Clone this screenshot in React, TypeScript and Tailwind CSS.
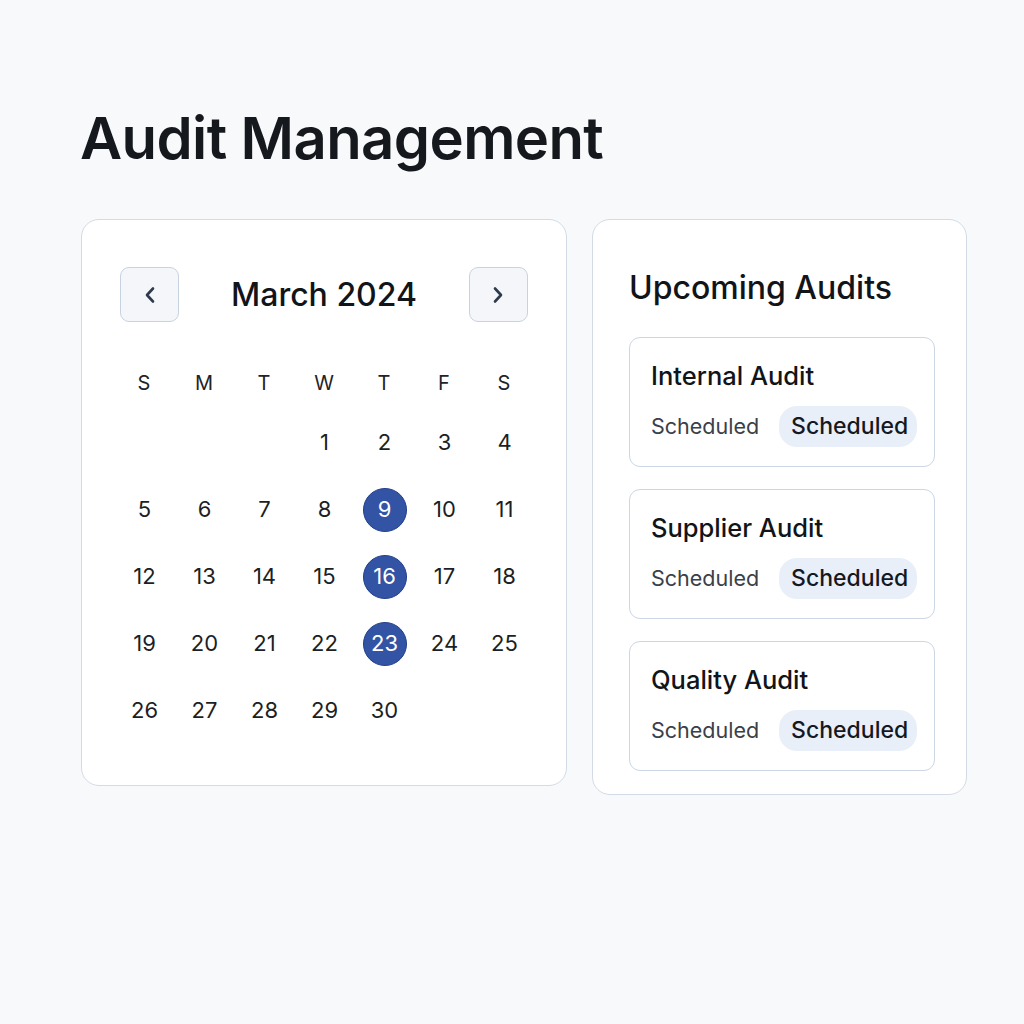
import React from "react";

const weekdays = ["S", "M", "T", "W", "T", "F", "S"];
const selected = new Set([9, 16, 23]);

function Chevron({ dir }: { dir: "left" | "right" }) {
  return (
    <svg width="12" height="18" viewBox="0 0 12 18" fill="none" stroke="#2f3a4c" strokeWidth="2.6" strokeLinecap="round" strokeLinejoin="round">
      {dir === "left" ? <path d="M9 2.5L3 9l6 6.5" /> : <path d="M3 2.5L9 9l-6 6.5" />}
    </svg>
  );
}

const audits = ["Internal Audit", "Supplier Audit", "Quality Audit"];

export default function App() {
  const cells: (number | null)[] = [null, null, null];
  for (let d = 1; d <= 30; d++) cells.push(d);
  return (
    <div className="min-h-screen w-full bg-[#f8f9fb] text-[#16191f]" style={{ fontFamily: "Inter, 'Noto Sans', sans-serif" }}>
      <div className="pl-[80px] pt-[103px]">
        <h1 className="text-[58px] leading-[70px] font-semibold tracking-[-0.6px] text-[#15181d]">Audit Management</h1>
        <div className="mt-[46px] flex items-start gap-[25px]">
          {/* Calendar */}
          <div className="ml-[1px] w-[486px] rounded-[18px] border border-[#d3dbe6] bg-white pl-[32px] pr-[32px] pt-[47px] pb-[41px]">
            <div className="flex items-center justify-between px-[6px]">
              <button className="flex h-[55px] w-[59px] items-center justify-center rounded-[9px] border border-[#c8d3e2] bg-[#f4f6f9]">
                <Chevron dir="left" />
              </button>
              <div className="text-[32px] font-medium leading-[40px] text-[#111418]">March 2024</div>
              <button className="flex h-[55px] w-[59px] items-center justify-center rounded-[9px] border border-[#c8d3e2] bg-[#f4f6f9]">
                <Chevron dir="right" />
              </button>
            </div>
            <div className="mt-[41px] grid w-[420px] grid-cols-7">
              {weekdays.map((w, i) => (
                <div key={i} className="flex h-[40px] items-center justify-center text-[20px] text-[#1f2328]">
                  {w}
                </div>
              ))}
            </div>
            <div className="mt-[6px] grid w-[420px] grid-cols-7">
              {cells.map((d, i) => (
                <div key={i} className="flex h-[67px] items-center justify-center pl-[1px]">
                  {d !== null &&
                    (selected.has(d) ? (
                      <div className="flex h-[44px] w-[44px] items-center justify-center rounded-full border border-[#213f8a] bg-[#3354a4] text-[22px] text-white">
                        {d}
                      </div>
                    ) : (
                      <span className="text-[22px] text-[#1c1f24]">{d}</span>
                    ))}
                </div>
              ))}
            </div>
          </div>
          {/* Upcoming */}
          <div className="w-[375px] rounded-[18px] border border-[#d3dbe6] bg-white pl-[36px] pr-[31px] pt-[50px] pb-[23px]">
            <h2 className="text-[32px] font-medium leading-[36px] text-[#111418]">Upcoming Audits</h2>
            <div className="mt-[31px] flex flex-col gap-[22px]">
              {audits.map((a) => (
                <div key={a} className="h-[130px] rounded-[11px] border border-[#ccd6e4] bg-white px-[21px] pt-[23px]">
                  <div className="text-[25.5px] font-medium leading-[30px] text-[#111418]">{a}</div>
                  <div className="mt-[15px] flex items-center gap-[20px]">
                    <span className="text-[21.5px] text-[#3b4048]">Scheduled</span>
                    <span className="flex h-[41px] items-center rounded-[18px] bg-[#e9eff9] pl-[12px] pr-[9px] text-[23px] font-medium text-[#15181d]">
                      Scheduled
                    </span>
                  </div>
                </div>
              ))}
            </div>
          </div>
        </div>
      </div>
    </div>
  );
}
